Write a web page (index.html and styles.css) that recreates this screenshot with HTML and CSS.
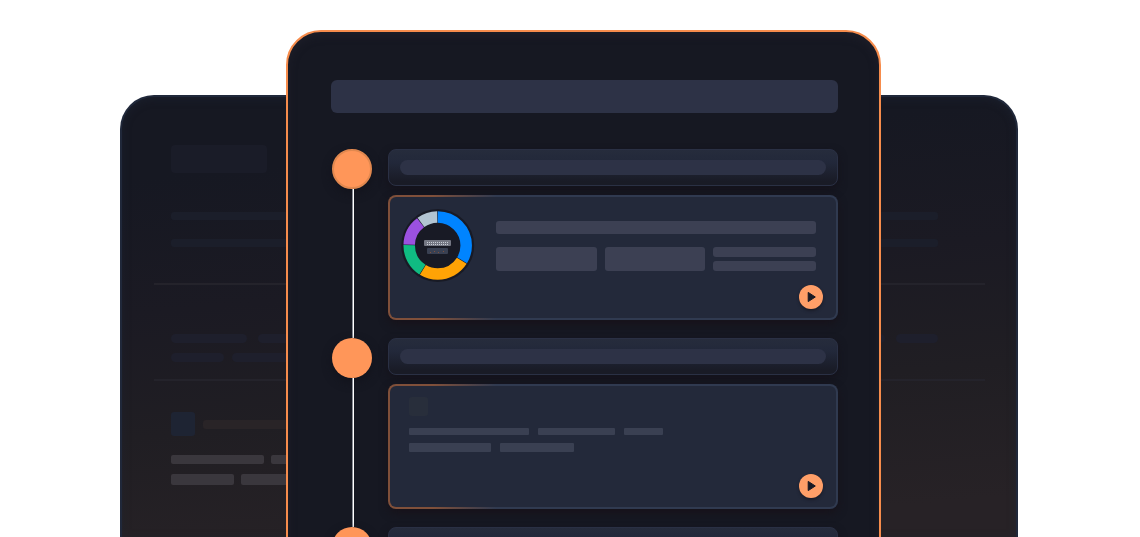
FILE: index.html
```html
<!DOCTYPE html>
<html lang="en">
<head>
<meta charset="utf-8">
<meta name="viewport" content="width=device-width, initial-scale=1">
<title>Timeline</title>
<link rel="stylesheet" href="styles.css">
</head>
<body>
<main class="stage">
  <section class="backdrop">
    <div class="group">
      <div class="block"></div>
      <div class="line"></div>
      <div class="line line-second"></div>
    </div>
    <div class="group group-middle">
      <div class="pills"><i class="w76"></i><i class="grow"></i><i class="w42"></i></div>
      <div class="pills pills-short"><i class="w53"></i><i class="w90"></i></div>
    </div>
    <div class="group group-last">
      <div class="lead"><i class="tile"></i><i class="label"></i></div>
      <div class="words"><i class="w93"></i><i class="w90"></i></div>
      <div class="words words-tall"><i class="w63"></i><i class="w90"></i></div>
    </div>
  </section>

  <section class="panel">
    <div class="title"></div>
    <ol class="steps">
      <li class="step">
        <div class="rail"><span class="dot dot-first"></span><span class="track"></span></div>
        <div class="content">
          <div class="heading"><div class="heading-bar"></div></div>
          <article class="card">
            <div class="summary">
              <svg class="donut" viewBox="0 0 74 74" aria-hidden="true">
                <circle cx="36.7" cy="37.5" r="36.5" fill="#181a25"/>
                <g fill="none" stroke-width="11.5" transform="translate(-.3 .5) rotate(-90 37 37)">
                  <circle cx="37" cy="37" r="28.5" pathLength="100" stroke="#0084ff" stroke-dasharray="33.7 66.3"/>
                  <circle cx="37" cy="37" r="28.5" pathLength="100" stroke="#ffa305" stroke-dasharray="24.7 75.3" stroke-dashoffset="-34"/>
                  <circle cx="37" cy="37" r="28.5" pathLength="100" stroke="#10bb82" stroke-dasharray="16.2 83.8" stroke-dashoffset="-59"/>
                  <circle cx="37" cy="37" r="28.5" pathLength="100" stroke="#9b51e0" stroke-dasharray="14.2 85.8" stroke-dashoffset="-75.5"/>
                  <circle cx="37" cy="37" r="28.5" pathLength="100" stroke="#b2c4d2" stroke-dasharray="9.7 90.3" stroke-dashoffset="-90"/>
                </g>
                <rect x="23" y="32" width="27" height="6" rx="1" fill="#747783"/>
                <path d="M26 34.5H48M26 36.5H48" stroke="#c9ced6" stroke-dasharray="1 1"/>
                <rect x="26" y="40" width="21" height="6" rx="1" fill="#394052"/>
                <path d="M29 44.5h1M33 43.5h1M37 44.5h1M42 43.5h1" stroke="#80503c"/>
              </svg>
              <div class="stats">
                <div class="stat-title"></div>
                <div class="stat-row">
                  <i></i><i></i>
                  <div class="stat-pair"><i></i><i></i></div>
                </div>
              </div>
            </div>
            <button class="play" type="button" aria-label="Play"><svg viewBox="0 0 24 24" aria-hidden="true"><path d="M9.2 7.4v9.2L16.3 12z" fill="#181a25" stroke="#181a25" stroke-linejoin="round"/></svg></button>
          </article>
        </div>
      </li>
      <li class="step">
        <div class="rail"><span class="dot"></span><span class="track"></span></div>
        <div class="content">
          <div class="heading"><div class="heading-bar"></div></div>
          <article class="card">
            <div class="note">
              <div class="thumb"></div>
              <div class="text"><i class="w120"></i><i class="w77"></i><i class="w39"></i></div>
              <div class="text text-tall"><i class="w82"></i><i class="w74"></i></div>
            </div>
            <button class="play" type="button" aria-label="Play"><svg viewBox="0 0 24 24" aria-hidden="true"><path d="M9.2 7.4v9.2L16.3 12z" fill="#181a25" stroke="#181a25" stroke-linejoin="round"/></svg></button>
          </article>
        </div>
      </li>
      <li class="step">
        <div class="rail"><span class="dot"></span></div>
        <div class="content">
          <div class="heading"><div class="heading-bar"></div></div>
        </div>
      </li>
    </ol>
  </section>
</main>
</body>
</html>
```

FILE: styles.css
```css
* {
  box-sizing: border-box;
}

body {
  margin: 0;
  background: #fff;
  font-family: Inter, "Liberation Sans", sans-serif;
}

i {
  display: block;
}

.stage {
  display: grid;
  grid-template-columns: 120fr 166fr 595fr 137fr 122fr;
  grid-template-rows: 100%;
  height: 100vh;
  overflow: hidden;
}

/* Dimmed page behind the main panel */
.backdrop {
  grid-area: 1 / 2 / 2 / 5;
  margin-top: 95px;
  padding: 48px 31px 0 32px;
  border: 2px solid #20283a;
  border-bottom: 0;
  border-radius: 34px 34px 0 0;
  background: linear-gradient(175deg, #161822 16%, #1b1a23 42%, #201e23 66%, #272226 92%);
  box-shadow: inset 0 2px 8px #20283a66;
}

.group {
  padding: 0 47px 36px 17px;
  border-bottom: 2px solid #24232b;
}

.block {
  width: 96px;
  height: 28px;
  margin-bottom: 39px;
  border-radius: 4px;
  background: #1a1c28;
}

.line {
  height: 8px;
  border-radius: 3px;
  background: #1b1e2a;
}

.line-second {
  margin-top: 19px;
}

.group-middle {
  padding-top: 49px;
  padding-bottom: 17px;
}

.group-last {
  padding-top: 31px;
  border: 0;
}

.pills {
  display: flex;
  gap: 11px;
}

.pills i {
  height: 9px;
  border-radius: 5px;
  background: #1e1f2c;
}

.pills-short {
  gap: 8px;
  margin-top: 10px;
}

.lead {
  display: flex;
  align-items: center;
  gap: 8px;
}

.tile {
  width: 24px;
  height: 24px;
  border-radius: 3px;
  background: #1e2433;
}

.label {
  width: 110px;
  height: 9px;
  border-radius: 3px;
  background: #292427;
}

.words {
  display: flex;
  gap: 7px;
  margin-top: 19px;
}

.words i {
  height: 9px;
  border-radius: 2px;
  background: #3a373d;
}

.words-tall {
  margin-top: 10px;
}

.words-tall i {
  height: 11px;
}

/* Main panel */
.panel {
  grid-area: 1 / 3;
  align-self: start;
  margin-top: 30px;
  padding: 48px 41px 48px 43px;
  border: 2px solid #f68c4c;
  border-radius: 35px;
  background: #161822;
  box-shadow: inset 0 3px 10px #2a283466;
}

.title {
  height: 33px;
  margin-bottom: 36px;
  border-radius: 6px;
  background: #2d3246;
}

.steps {
  margin: 0;
  padding: 0;
  list-style: none;
}

.step {
  display: flex;
  gap: 15px;
}

.rail {
  display: flex;
  flex: none;
  flex-direction: column;
  align-items: center;
  width: 42px;
}

.dot {
  width: 40px;
  height: 40px;
  border-radius: 50%;
  background: #ff9659;
  box-shadow: 0 4px 10px #12131c;
}

.dot-first {
  border: 2px solid #e1884f;
}

.track {
  flex: 1;
  width: 2px;
  margin-left: 2px;
  border-left: 1px solid #888b94;
  background: #fff;
}

.content {
  flex: 1;
  padding-bottom: 18px;
}

.heading {
  height: 37px;
  margin-bottom: 9px;
  padding: 10px 11px;
  border: 1px solid #2a3044;
  border-radius: 8px;
  background: linear-gradient(#262c3c, #22283a 35%, #191b26 90%);
  box-shadow: 0 4px 8px #14121b;
}

.heading-bar {
  height: 15px;
  border-radius: 8px;
  background: #2d3246;
}

.card {
  display: flex;
  flex-direction: column;
  gap: 3px;
  min-height: 125px;
  padding: 11px 13px 9px 11px;
  border: 2px solid transparent;
  border-radius: 8px;
  background:
    linear-gradient(#23293a, #23293a) padding-box,
    linear-gradient(90deg, #80503a 10%, #303a50 24%) border-box;
  box-shadow: 0 4px 8px #17121a;
}

.summary {
  display: flex;
  gap: 21px;
  padding-right: 7px;
}

.donut {
  flex: none;
  width: 74px;
  height: 74px;
}

.stats {
  flex: 1;
  padding-top: 13px;
}

.stat-title,
.stat-row i {
  border-radius: 3px;
  background: #3c4053;
}

.stat-title {
  height: 13px;
  margin-bottom: 13px;
}

.stat-row {
  display: grid;
  grid-template-columns: 1fr 1fr 103px;
  gap: 8px;
  height: 24px;
}

.stat-pair {
  display: grid;
  gap: 4px;
}

.note {
  padding-left: 8px;
}

.thumb {
  width: 19px;
  height: 19px;
  margin-bottom: 12px;
  border-radius: 3px;
  background: #282e3b;
}

.text {
  display: flex;
  gap: 9px;
}

.text i {
  height: 7px;
  border-radius: 1px;
  background: #3a4052;
}

.text-tall {
  margin-top: 8px;
}

.text-tall i {
  height: 9px;
}

.play {
  align-self: flex-end;
  width: 24px;
  height: 24px;
  margin-top: auto;
  padding: 0;
  border: 0;
  border-radius: 50%;
  background: #ff9f68;
  box-shadow: 0 2px 3px #1a1c28;
  cursor: pointer;
}

.play svg {
  display: block;
}

/* Placeholder widths */
.grow { flex: 1; }
.w39 { width: 39px; }
.w42 { width: 42px; }
.w53 { width: 53px; }
.w63 { width: 63px; }
.w74 { width: 74px; }
.w76 { width: 76px; }
.w77 { width: 77px; }
.w82 { width: 82px; }
.w90 { width: 90px; }
.w93 { width: 93px; }
.w120 { width: 120px; }
```
